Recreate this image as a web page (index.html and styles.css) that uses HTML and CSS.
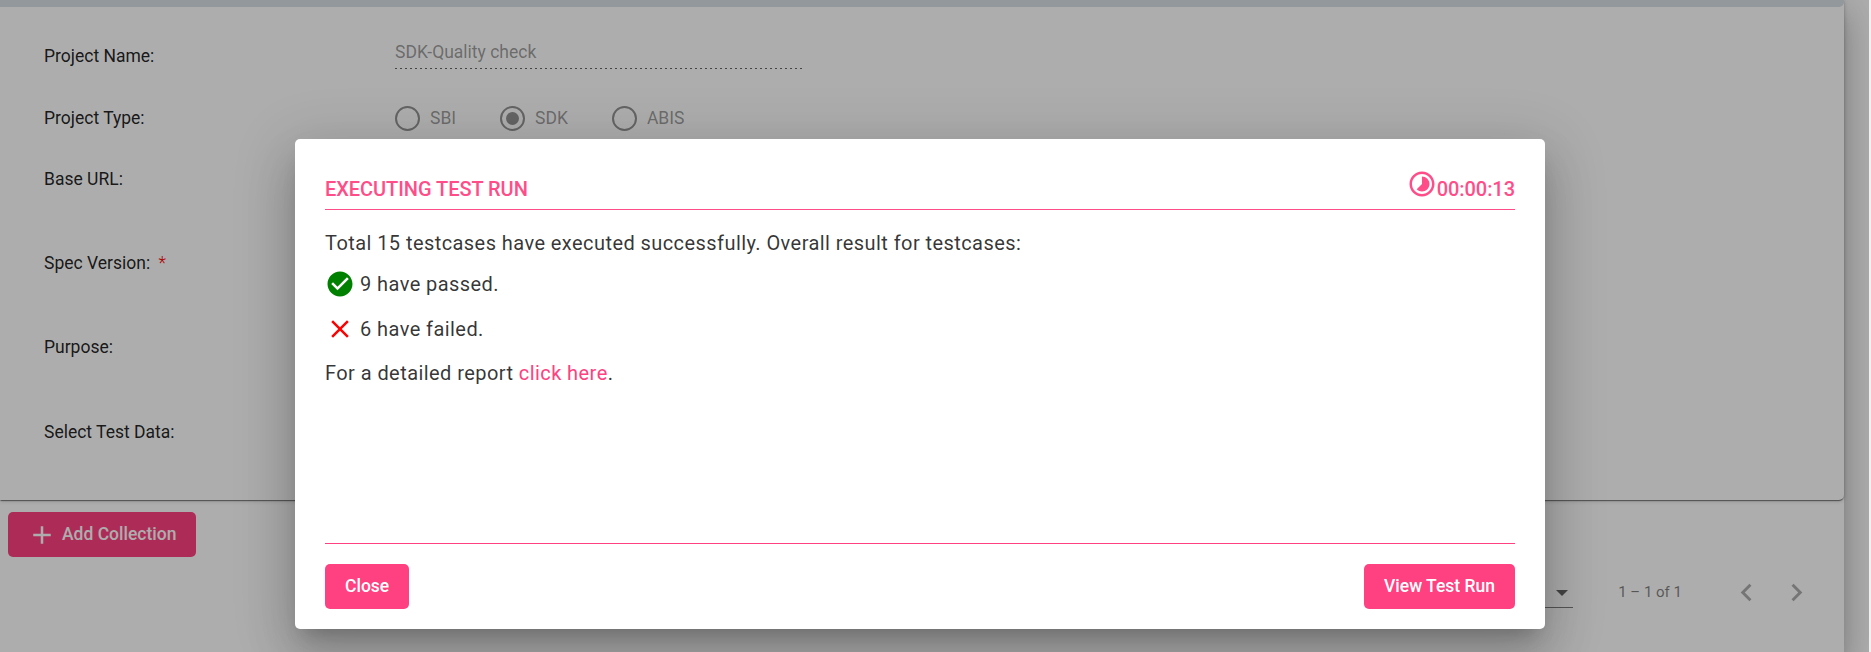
FILE: index.html
```html
<!DOCTYPE html>
<html lang="en">
<head>
<meta charset="utf-8">
<title>Test Run</title>
<link rel="stylesheet" href="styles.css">
</head>
<body>
<div class="page">
  <main class="content">
    <section class="card">
      <div class="card-header"></div>
      <div class="form">
        <div class="row row-name"><span class="label">Project Name:</span><span class="field">SDK-Quality check</span></div>
        <div class="row row-type"><span class="label">Project Type:</span>
          <div class="radios">
            <span class="radio"><i class="circle"></i>SBI</span>
            <span class="radio"><i class="circle checked"></i>SDK</span>
            <span class="radio"><i class="circle"></i>ABIS</span>
          </div>
        </div>
        <div class="row row-url"><span class="label">Base URL:</span></div>
        <div class="row row-tall"><span class="label">Spec Version: <span class="required">*</span></span></div>
        <div class="row row-tall"><span class="label">Purpose:</span></div>
        <div class="row row-tall"><span class="label">Select Test Data:</span></div>
      </div>
    </section>
    <div class="toolbar">
      <button class="btn add"><svg width="30" height="30" viewBox="0 0 24 24"><path d="M19 13h-6v6h-2v-6H5v-2h6V5h2v6h6v2z" fill="currentColor"/></svg>Add Collection</button>
    </div>
    <div class="paginator">
      <span class="select"><i class="caret"></i></span>
      <span class="range">1 – 1 of 1</span>
      <svg class="prev" width="35" height="35" viewBox="0 0 24 24"><path d="M15.41 7.41L14 6l-6 6 6 6 1.41-1.41L10.83 12z"/></svg>
      <svg class="next" width="35" height="35" viewBox="0 0 24 24"><path d="M10 6L8.59 7.41 13.17 12l-4.58 4.59L10 18l6-6z"/></svg>
    </div>
  </main>
</div>
<div class="backdrop"></div>
<div class="dialog">
  <header class="dialog-head">
    <span class="title">EXECUTING TEST RUN</span>
    <span class="timer"><svg width="30" height="30" viewBox="0 0 24 24"><path d="M16.24 7.76C15.07 6.59 13.54 6 12 6v6l-4.24 4.24c2.34 2.34 6.14 2.34 8.49 0 2.34-2.34 2.34-6.14-.01-8.48zM12 2C6.48 2 2 6.48 2 12s4.48 10 10 10 10-4.48 10-10S17.52 2 12 2zm0 18c-4.42 0-8-3.58-8-8s3.58-8 8-8 8 3.58 8 8-3.58 8-8 8z" fill="currentColor"/></svg><span>00:00:13</span></span>
  </header>
  <div class="dialog-body">
    <p class="summary">Total 15 testcases have executed successfully. Overall result for testcases:</p>
    <p class="result"><svg width="30" height="30" viewBox="0 0 24 24"><path d="M12 2C6.48 2 2 6.48 2 12s4.48 10 10 10 10-4.48 10-10S17.52 2 12 2zm-2 15l-5-5 1.41-1.41L10 14.17l7.59-7.59L19 8l-9 9z" fill="#008000"/></svg><span>9 have passed.</span></p>
    <p class="result"><svg width="30" height="30" viewBox="0 0 24 24"><path d="M19 6.41L17.59 5 12 10.59 6.41 5 5 6.41 10.59 12 5 17.59 6.41 19 12 13.41 17.59 19 19 17.59 13.41 12z" fill="#f00"/></svg><span>6 have failed.</span></p>
    <p class="report">For a detailed report <a class="link">click here</a>.</p>
  </div>
  <footer class="dialog-foot"><button class="btn">Close</button><button class="btn">View Test Run</button></footer>
</div>
</body>
</html>
```

FILE: styles.css
```css
* { box-sizing: border-box; }
body { margin: 0; width: 1871px; height: 652px; overflow: hidden; background: #f1f1f1; font-family: Roboto, sans-serif; font-size: 17.5px; color: rgba(0,0,0,.87); }
p { margin: 0; }
svg { display: block; flex: none; }
.page { display: flex; width: 1869px; height: 652px; background: #fff; overflow: hidden; }
.content { width: 1844px; height: 652px; background: #fff; box-shadow: 0 10px 12px -5px rgba(0,0,0,.2), 0 20px 30px 2px rgba(0,0,0,.14), 0 7px 37px 6px rgba(0,0,0,.12); }
.card { height: 500px; background: #fff; border-radius: 0 0 5px 0; box-shadow: 0 2px 1px -1px rgba(0,0,0,.3), 0 1px 1px rgba(0,0,0,.24), 0 1px 4px rgba(0,0,0,.2); }
.card-header { height: 7px; background: #d9e1e6; border-radius: 0 0 5px 0; }
.form { padding: 18px 0 0 44px; font-weight: 400; color: rgba(0,0,0,.87); }
.row { display: flex; align-items: center; }
.label { width: 351px; white-space: pre; }
.required { color: #f00; padding-left: 4px; font-weight: 300; }
.row-name { height: 61px; }
.row-type { height: 63px; }
.row-url { height: 60px; }
.row-tall { height: 84.5px; }
.row-url + .row-tall { height: 107px; }
.row-url + .row-tall + .row-tall { height: 62px; }
.row-url + .row-tall + .row-tall + .row-tall { height: 107px; }
.field { width: 407px; height: 31px; margin-top: -4px; line-height: 28px; color: rgba(0,0,0,.4); background: repeating-linear-gradient(90deg, rgba(0,0,0,.6) 0 2px, transparent 2px 5px) bottom / 100% 1px no-repeat; }
.radios { display: flex; gap: 44px; padding-top: 1px; color: rgba(0,0,0,.4); }
.radio { display: flex; align-items: center; gap: 10px; }
.circle { width: 25px; height: 25px; border: 2px solid #949494; border-radius: 50%; display: grid; place-items: center; }
.circle.checked::after { content: ""; width: 13px; height: 13px; border-radius: 50%; background: #949494; }
.toolbar { padding: 12px 8px 0; }
.btn { height: 45px; padding: 0 20px; border: 0; border-radius: 5px; background: #ff4081; color: #fff; font: 500 17.5px/45px Roboto, sans-serif; }
.add { display: flex; align-items: center; gap: 5px; padding: 0 20px 0 19px; }
.paginator { display: flex; align-items: center; height: 70px; padding-right: 30px; justify-content: flex-end; font-size: 15px; color: rgba(0,0,0,.5); }
.select { width: 70px; height: 31px; margin-right: 45px; padding: 13px 5px 0 0; border-bottom: 1px solid rgba(0,0,0,.5); }
.caret { display: block; width: 12px; margin-left: auto; border: 6px solid transparent; border-top-color: rgba(0,0,0,.6); border-bottom: 0; }
.prev, .next { fill: rgba(0,0,0,.32); }
.prev { margin-left: 47px; }
.next { margin-left: 15px; }
.backdrop { position: absolute; top: 0; left: 0; width: 1869px; height: 652px; background: rgba(0,0,0,.32); }
.dialog { position: absolute; left: 295px; top: 139px; width: 1250px; height: 490px; padding: 30px 30px 20px; display: flex; flex-direction: column; background: #fff; border-radius: 5px; box-shadow: 0 14px 19px -9px rgba(0,0,0,.2), 0 30px 48px 4px rgba(0,0,0,.14), 0 11px 58px 10px rgba(0,0,0,.12); }
.dialog-head { height: 41px; display: flex; justify-content: space-between; border-bottom: 1px solid #ff4d8a; color: #ff4d8a; font-weight: 500; font-size: 20px; line-height: 40px; letter-spacing: -.05px; }
.timer { display: flex; }
.dialog-body { flex: 1; padding-top: 18px; border-bottom: 1px solid #ff4081; color: rgba(0,0,0,.8); font-size: 20px; letter-spacing: .43px; line-height: 30px; }
.result { display: flex; margin-top: 11px; height: 30px; gap: 5px; }
.result + .result { margin-top: 15px; }
.report { margin-top: 14px; }
.link { color: #ff4081; }
.dialog-foot { display: flex; justify-content: space-between; padding-top: 20px; height: 65px; }
```
